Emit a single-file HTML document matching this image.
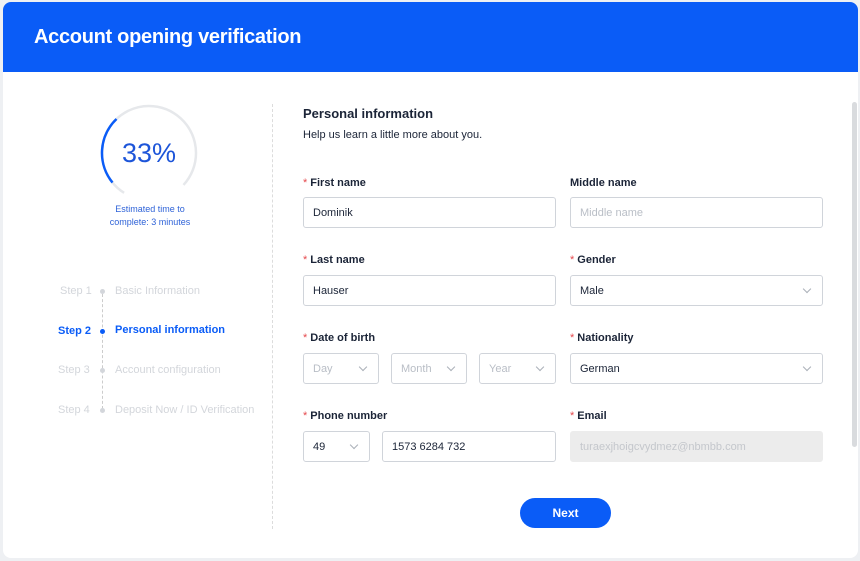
<!DOCTYPE html>
<html><head><style>
*{box-sizing:border-box;margin:0;padding:0}
body{width:860px;height:561px;background:#eef0f3;font-family:"Liberation Sans",sans-serif;position:relative;overflow:hidden;color:#1b2437}
.card{position:absolute;left:3px;top:2px;width:855px;height:556px;background:#fff;border-radius:8px;overflow:hidden}
.hdr{position:absolute;left:0;top:0;width:855px;height:70px;background:#0a5cf7}
.hdr h1{position:absolute;left:31px;top:24px;font-size:20px;color:#fff;font-weight:bold;letter-spacing:-0.3px}
.a{position:absolute}
.lbl{position:absolute;font-size:11px;font-weight:bold;color:#1b2437}
.lbl i{color:#e5484d;font-style:normal;font-weight:normal;margin-right:3px}
.in{position:absolute;height:31px;border:1px solid #d0d4da;border-radius:3px;font-size:11px;padding:1px 9px 0;line-height:29px;color:#1b2437;background:#fff}
.ph{color:#b9bec6}
.chev{position:absolute;right:12px;top:10px;width:6px;height:6px;border-right:1px solid #aab0b8;border-bottom:1px solid #aab0b8;transform:rotate(45deg)}
.st{position:absolute;font-size:11px;color:#d3d6db}
.dot{position:absolute;width:5px;height:5px;border-radius:50%;background:#d3d6db}
</style></head><body>
<div class="card">
<div class="hdr"><h1>Account opening verification</h1></div>
<div class="a" style="left:849px;top:100px;width:5px;height:345px;background:#d9dbde;border-radius:3px"></div>
<svg class="a" style="left:93px;top:98px" width="106" height="106" viewBox="0 0 106 106">
<circle cx="53" cy="53" r="47" fill="none" stroke="#e6e8eb" stroke-width="2.5" stroke-dasharray="230 65.3" transform="rotate(122 53 53)"/>
<path d="M16.5 82.6 A47 47 0 0 1 20.5 19" fill="none" stroke="#0a5cf7" stroke-width="2.5"/>
<text x="53" y="62" text-anchor="middle" font-size="27" fill="#1d55d9" font-family="Liberation Sans">33%</text>
</svg>
<div class="a" style="left:82px;top:201px;width:130px;text-align:center;font-size:9px;line-height:13px;color:#2f63d8">Estimated time to<br>complete: 3 minutes</div>
<div class="a" style="left:99px;top:292px;height:115px;border-left:1px dashed #ccc"></div>
<div class="st" style="left:57px;top:283px">Step 1</div><div class="dot" style="left:97px;top:287px"></div><div class="st" style="left:112px;top:283px">Basic Information</div>
<div class="st" style="left:55px;top:323px;color:#0a5cf7;font-weight:bold">Step 2</div><div class="dot" style="left:97px;top:327px;background:#0a5cf7"></div><div class="st" style="left:112px;top:322px;color:#0a5cf7;font-weight:bold">Personal information</div>
<div class="st" style="left:55px;top:362px">Step 3</div><div class="dot" style="left:97px;top:366px"></div><div class="st" style="left:112px;top:362px">Account configuration</div>
<div class="st" style="left:55px;top:402px">Step 4</div><div class="dot" style="left:97px;top:406px"></div><div class="st" style="left:112px;top:402px">Deposit Now / ID Verification</div>
<div class="a" style="left:269px;top:102px;height:425px;border-left:1px dashed #dcdcdc"></div>
<div class="a" style="left:300px;top:104px;font-size:13px;font-weight:bold">Personal information</div>
<div class="a" style="left:300px;top:127px;font-size:11px">Help us learn a little more about you.</div>
<div class="lbl" style="left:300px;top:175px"><i>*</i>First name</div>
<div class="lbl" style="left:567px;top:175px">Middle name</div>
<div class="in" style="left:300px;top:195px;width:253px">Dominik</div>
<div class="in ph" style="left:567px;top:195px;width:253px">Middle name</div>
<div class="lbl" style="left:300px;top:252px"><i>*</i>Last name</div>
<div class="lbl" style="left:567px;top:252px"><i>*</i>Gender</div>
<div class="in" style="left:300px;top:273px;width:253px">Hauser</div>
<div class="in" style="left:567px;top:273px;width:253px">Male<span class="chev"></span></div>
<div class="lbl" style="left:300px;top:330px"><i>*</i>Date of birth</div>
<div class="lbl" style="left:567px;top:330px"><i>*</i>Nationality</div>
<div class="in ph" style="left:300px;top:351px;width:76px">Day<span class="chev"></span></div>
<div class="in ph" style="left:388px;top:351px;width:76px">Month<span class="chev"></span></div>
<div class="in ph" style="left:476px;top:351px;width:77px">Year<span class="chev"></span></div>
<div class="in" style="left:567px;top:351px;width:253px">German<span class="chev"></span></div>
<div class="lbl" style="left:300px;top:408px"><i>*</i>Phone number</div>
<div class="lbl" style="left:567px;top:408px"><i>*</i>Email</div>
<div class="in" style="left:300px;top:429px;width:67px">49<span class="chev"></span></div>
<div class="in" style="left:379px;top:429px;width:174px">1573 6284 732</div>
<div class="in" style="left:567px;top:429px;width:253px;background:#ececec;border-color:#ececec;color:#c4c7cc">turaexjhoigcvydmez@nbmbb.com</div>
<div class="a" style="left:517px;top:496px;width:91px;height:30px;border-radius:15px;background:#0a5cf7;color:#fff;font-size:12px;font-weight:bold;text-align:center;line-height:30px">Next</div>
</div>
</body></html>
